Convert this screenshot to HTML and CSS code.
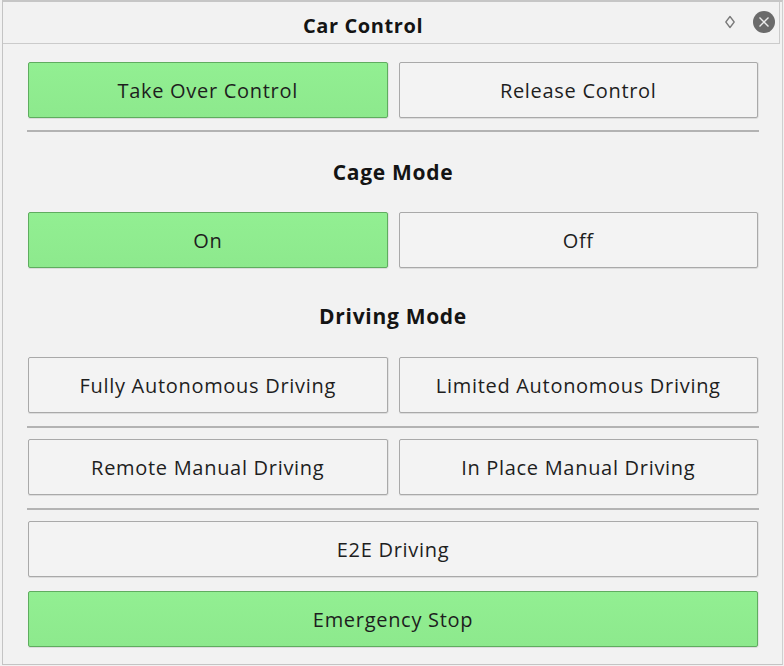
FILE: index.html
```html
<!DOCTYPE html>
<html>
<head>
<meta charset="utf-8">
<link rel="stylesheet" href="styles.css">
</head>
<body>
<div class="window">
  <div class="titlebar">
    <span class="title">Car Control</span>
    <svg class="float-icon" width="12" height="14" viewBox="0 0 12 14"><path d="M6 1.5 L10.2 7 L6 12.5 L1.8 7 Z" fill="none" stroke="#7a7a7a" stroke-width="1.3" stroke-linejoin="round"/></svg>
    <svg class="close-icon" width="24" height="24" viewBox="0 0 24 24"><circle cx="12" cy="12" r="11" fill="#6b6b6b"/><path d="M7.5 7.5 L16.5 16.5 M16.5 7.5 L7.5 16.5" stroke="#ececec" stroke-width="1.4"/></svg>
  </div>
  <div class="content">
    <div class="row first">
      <button class="btn green">Take Over Control</button>
      <button class="btn">Release Control</button>
    </div>
    <div class="sep sep1"></div>
    <div class="label cage">Cage Mode</div>
    <div class="row">
      <button class="btn green">On</button>
      <button class="btn">Off</button>
    </div>
    <div class="label driving">Driving Mode</div>
    <div class="row">
      <button class="btn">Fully Autonomous Driving</button>
      <button class="btn">Limited Autonomous Driving</button>
    </div>
    <div class="sep sep2"></div>
    <div class="row gap-after-sep">
      <button class="btn">Remote Manual Driving</button>
      <button class="btn">In Place Manual Driving</button>
    </div>
    <div class="sep sep2"></div>
    <div class="row gap-after-sep">
      <button class="btn full">E2E Driving</button>
    </div>
    <div class="row emergency">
      <button class="btn green full">Emergency Stop</button>
    </div>
  </div>
</div>
</body>
</html>
```

FILE: styles.css
```css
html, body {
  margin: 0;
  padding: 0;
  background: #f2f2f2;
}
body {
  font-family: "Open Sans", "Noto Sans", sans-serif;
  color: #1e1e1e;
}
.window {
  margin-left: 2px;
  border-top: 2px solid #c6c6c6;
  border-left: 1px solid #c4c4c4;
  border-right: 1px solid #cfcfcf;
  border-bottom: 1px solid #c4c4c4;
  box-sizing: border-box;
  width: 781px;
  height: 665px;
}
.titlebar {
  position: relative;
  height: 42px;
  width: 777px;
  box-sizing: border-box;
  border-bottom: 1px solid #cbcbcb;
  border-right: 1px solid #cbcbcb;
  display: flex;
  align-items: center;
  padding-top: 5px;
}
.title {
  margin-left: 300px;
  font-weight: 700;
  font-size: 20px;
  letter-spacing: 0.6px;
  color: #141414;
}
.float-icon {
  position: absolute;
  left: 721px;
  top: 13px;
}
.close-icon {
  position: absolute;
  left: 749px;
  top: 8px;
}
.content {
  padding: 18px 24px 0 25px;
}
.row {
  display: flex;
  gap: 11px;
}
.btn {
  flex: 1 1 0;
  height: 56px;
  margin: 0;
  padding: 0;
  border: 1px solid #a9a9a9;
  border-radius: 2px;
  background: #f3f3f3;
  box-shadow: 0 1px 0 #dcdcdc, 1px 0 0 #e2e2e2;
  font-family: "Open Sans", "Noto Sans", sans-serif;
  font-size: 20px;
  letter-spacing: 0.7px;
  color: #1e1e1e;
}
.btn.green {
  background: linear-gradient(#92ef92, #8de98d);
  border-color: #5fac5f;
}
.btn.full {
  flex: 1 1 auto;
}
.sep {
  height: 2px;
  background: #b3b3b3;
  margin-left: -1px;
  margin-right: -1px;
}
.sep1 {
  margin-top: 12px;
}
.sep2 {
  margin-top: 13px;
}
.gap-after-sep {
  margin-top: 11px;
}
.emergency {
  margin-top: 14px;
}
.label {
  display: flex;
  align-items: center;
  justify-content: center;
  font-weight: 700;
  font-size: 21px;
  letter-spacing: 0.7px;
  color: #141414;
}
.cage {
  height: 80px;
}
.driving {
  height: 82px;
  padding-top: 7px;
}
```
